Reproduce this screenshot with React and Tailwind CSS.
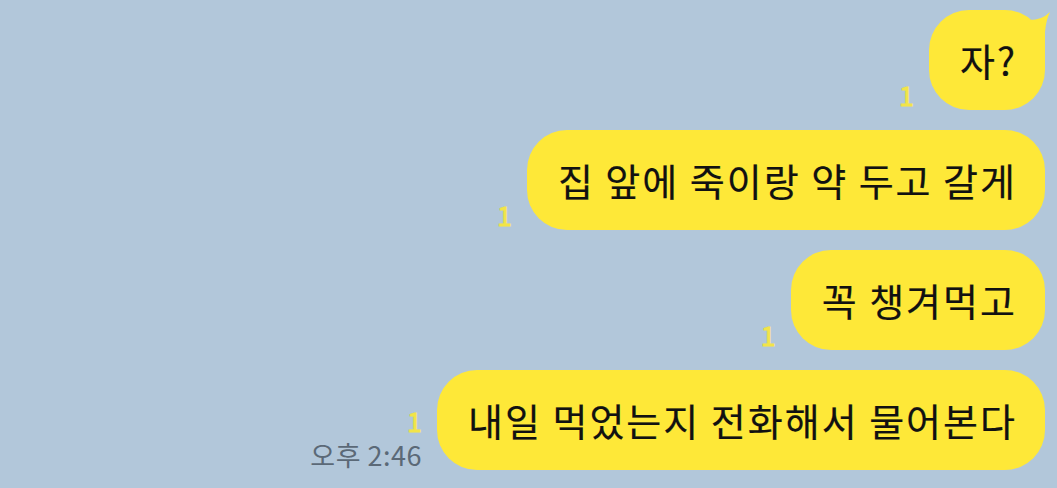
import React from "react";

const font = { fontFamily: '"Noto Sans CJK KR", "Noto Sans", sans-serif' };

function Bubble({ text, tail, time }) {
  return (
    <div className="flex items-end gap-[15px]">
      <div className="flex flex-col items-end pb-[2px]">
        <span className="text-[27px] leading-[26px] text-[#f2e448] [-webkit-text-stroke:0.9px_#f2e448]">1</span>
        {time && (
          <span className="mt-[8px] text-[27px] leading-[26px] tracking-[0.5px] text-[#5b6977] whitespace-nowrap">
            {time}
          </span>
        )}
      </div>
      <div className="relative flex h-[100px] items-center rounded-[40px] bg-[#fee838] pl-[31px] pr-[28px]">
        <span className="text-[38px] font-normal leading-none tracking-[2px] text-[#111111] whitespace-nowrap [-webkit-text-stroke:0.2px_#111111]">{text}</span>
        {tail && (
          <svg
            className="absolute right-[-6px] top-0 h-[45px] w-[30px] overflow-visible"
            viewBox="0 0 30 45"
          >
            <path d="M6 10 Q20 11 29 2 Q25 10 24 22 L24 45 L6 45 Z" fill="#fee838" />
          </svg>
        )}
      </div>
    </div>
  );
}

export default function App() {
  return (
    <div
      className="flex h-[488px] w-[1057px] flex-col items-end gap-[20px] overflow-hidden bg-[#b2c7da] pr-[12px] pt-[10px]"
      style={font}
    >
      <Bubble text="자?" tail />
      <Bubble text="집 앞에 죽이랑 약 두고 갈게" />
      <Bubble text="꼭 챙겨먹고" />
      <Bubble text="내일 먹었는지 전화해서 물어본다" time="오후 2:46" />
    </div>
  );
}
